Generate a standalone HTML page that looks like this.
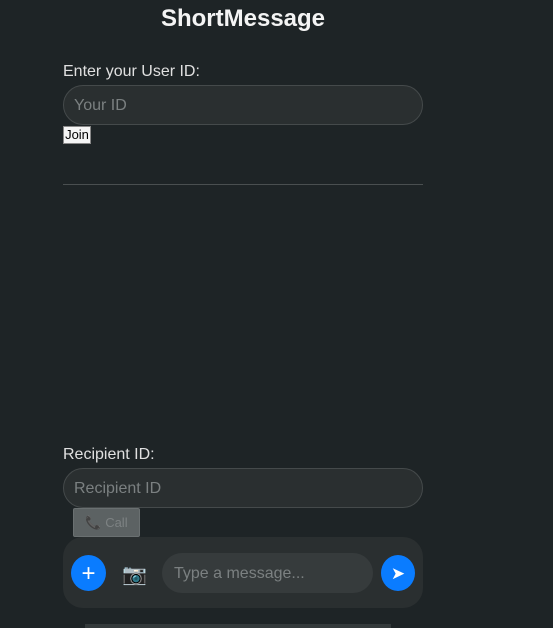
<!DOCTYPE html>
<html><head><meta charset="utf-8"><style>
*{box-sizing:border-box;margin:0;padding:0}
body{width:553px;height:628px;overflow:hidden;background:#1e2426;font-family:"Liberation Sans",sans-serif;color:#ddd;position:relative}
.a{position:absolute}
h1{position:absolute;left:0;width:486px;text-align:center;top:5px;font-size:24px;font-weight:bold;color:#f4f4f4}
.lbl{font-size:16px;color:#e0e0e0}
.inp{border:1px solid #454a4b;background:#2a2f30;border-radius:20px;height:40px;width:360px;left:63px;font-size:16px;color:#7b8081;padding-left:10px;line-height:40px}
</style></head><body>
<h1>ShortMessage</h1>
<div class="a lbl" style="left:63px;top:63px">Enter your User ID:</div>
<div class="a inp" style="top:85px">Your ID</div>
<div class="a" style="left:63px;top:126px;width:28px;height:18px;background:#f4f4f4;border:1px solid #888;color:#000;font-size:13px;line-height:16px;text-align:center">Join</div>
<div class="a" style="left:63px;top:184px;width:360px;height:1px;background:#4a4f50"></div>
<div class="a lbl" style="left:63px;top:446px">Recipient ID:</div>
<div class="a inp" style="top:468px">Recipient ID</div>
<div class="a" style="left:73px;top:508px;width:67px;height:29px;background:#5c6263;border:1px solid #6a7071;border-radius:2px;color:#7d8283;font-size:13px;line-height:27px;text-align:center">📞 Call</div>
<div class="a" style="left:63px;top:537px;width:360px;height:71px;background:#2a2f30;border-radius:20px"></div>
<div class="a" style="left:71px;top:555px;width:35px;height:36px;border-radius:50%;background:#0a7cff;color:#fff;font-size:24px;text-align:center;line-height:37px">+</div>
<div class="a" style="left:122px;top:563px;font-size:20px;line-height:24px">📷</div>
<div class="a" style="left:162px;top:553px;width:211px;height:40px;border-radius:20px;background:#363b3c;color:#7b8081;font-size:16px;line-height:41px;padding-left:12px">Type a message...</div>
<div class="a" style="left:381px;top:555px;width:34px;height:36px;border-radius:50%;background:#0a7cff;color:#fff;font-size:17px;text-align:center;line-height:37px">➤</div>
<div class="a" style="left:85px;top:624px;width:306px;height:4px;background:#343a3b"></div>
</body></html>
